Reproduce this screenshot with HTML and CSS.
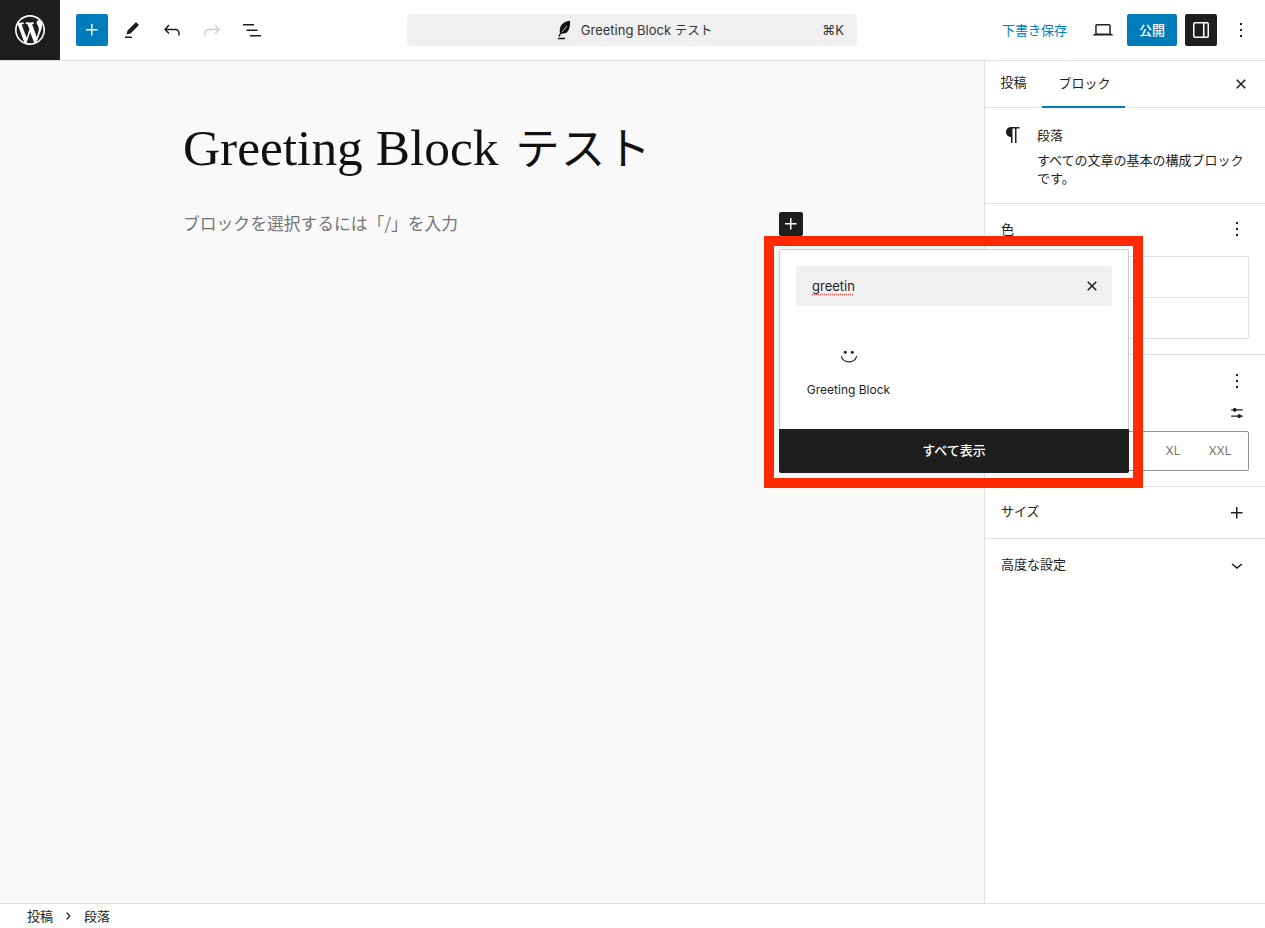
FILE: index.html
```html
<!DOCTYPE html>
<html lang="ja">
<head>
<meta charset="utf-8">
<title>Greeting Block テスト</title>
<link rel="stylesheet" href="styles.css">
</head>
<body>
<div class="app">
  <header class="topbar">
    <div class="top-left">
      <a class="wp-logo"><svg class="logo-svg" viewBox="0 0 20 20"><path d="M20 10c0-5.51-4.49-10-10-10C4.48 0 0 4.49 0 10c0 5.52 4.48 10 10 10 5.51 0 10-4.48 10-10zM7.78 15.37L4.37 6.22c.55-.02 1.17-.08 1.17-.08.5-.06.44-1.13-.06-1.11 0 0-1.45.11-2.37.11-.18 0-.37 0-.58-.01C4.12 2.69 6.87 1.11 10 1.11c2.33 0 4.45.87 6.05 2.34-.68-.11-1.65.39-1.65 1.58 0 .74.45 1.36.9 2.1.35.61.55 1.36.55 2.46 0 1.49-1.4 5-1.4 5l-3.03-8.37c.54-.02.82-.17.82-.17.5-.05.44-1.25-.06-1.22 0 0-1.44.12-2.38.12-.87 0-2.33-.12-2.33-.12-.5-.03-.56 1.2-.06 1.22l.92.08 1.26 3.41zM17.41 10c.24-.64.74-1.87.43-4.25.7 1.29 1.05 2.71 1.05 4.25 0 3.29-1.73 6.24-4.4 7.78.97-2.59 1.94-5.2 2.92-7.78zM6.1 18.09C3.12 16.65 1.11 13.53 1.11 10c0-1.3.23-2.48.72-3.59C3.25 10.3 4.67 14.2 6.1 18.09zm4.03-6.63l2.58 6.98c-.86.29-1.76.45-2.71.45-.79 0-1.57-.11-2.29-.33.81-2.38 1.62-4.74 2.42-7.1z"/></svg></a>
      <div class="tools">
        <button class="icon-btn primary"><svg class="ic" viewBox="0 0 24 24"><path d="M11 12.5V17.5H12.5V12.5H17.5V11H12.5V6H11V11H6V12.5H11Z"/></svg></button>
        <button class="icon-btn tool"><svg class="ic" viewBox="0 0 24 24"><path d="m19 7-3-3-8.5 8.5-1 4 4-1L19 7Zm-7 11.5H5V20h7v-1.5Z"/></svg></button>
        <button class="icon-btn tool"><svg class="ic" viewBox="0 0 24 24"><path d="M18.3 11.7c-.6-.6-1.4-.9-2.3-.9H6.7l2.9-3.3-1.1-1-4.5 5L8.5 16l1-1-2.7-2.7H16c.5 0 .9.2 1.3.5 1 1 1 3.4 1 4.5v.3h1.5v-.2c0-1.5 0-4.3-1.5-5.7z"/></svg></button>
        <button class="icon-btn tool muted"><svg class="ic" viewBox="0 0 24 24"><path d="M15.6 6.5l-1.1 1 2.9 3.3H8c-.9 0-1.7.3-2.3.9-1.4 1.5-1.4 4.2-1.4 5.6v.2h1.5v-.3c0-1.1 0-3.5 1-4.5.3-.3.7-.5 1.3-.5h9.2L14.5 15l1.1 1.1 4.6-4.6-4.6-5z"/></svg></button>
        <button class="icon-btn tool"><svg class="ic" viewBox="0 0 24 24"><path d="M3 6h11v1.5H3V6Zm3.5 5.5h11V13h-11v-1.5ZM21 17H10v1.5h11V17Z"/></svg></button>
      </div>
    </div>
    <div class="command">
      <div class="command-title">
        <svg class="ic feather" viewBox="0 0 24 24"><path fill-rule="evenodd" d="M18.500 2.500C13.500 3.100 10.200 5.100 8.600 8.300 7.600 10.400 7.600 13.100 8 14.900L6.400 18.100l1.200.6 1.500-3c2.200.3 4.600-.2 6.300-1.900 2.200-2.200 2.900-6.200 2.600-11.300zM9.600 14.200L14.700 7.800l.5.4-5.100 6.400zM6 19.700h7v1.500H6v-1.500z"/></svg>
        <span>Greeting Block <span class="title-ja">テスト</span></span>
      </div>
      <span class="shortcut">⌘K</span>
    </div>
    <div class="top-right">
      <a class="save-link">下書き保存</a>
      <button class="icon-btn view"><svg class="ic" viewBox="0 0 24 24"><path d="M20.5 16h-.7V8c0-1.1-.9-2-2-2H6.2c-1.1 0-2 .9-2 2v8h-.7c-.8 0-1.5.7-1.5 1.5h20c0-.8-.7-1.5-1.5-1.5zM5.7 8c0-.3.2-.5.5-.5h11.6c.3 0 .5.2.5.5v7.6H5.7V8z"/></svg></button>
      <button class="publish">公開</button>
      <button class="icon-btn dark"><svg class="ic" viewBox="0 0 24 24"><path fill-rule="evenodd" d="M18 4H6c-1.1 0-2 .9-2 2v12c0 1.1.9 2 2 2h12c1.1 0 2-.9 2-2V6c0-1.1-.9-2-2-2zm-4 14.5H6c-.3 0-.5-.2-.5-.5V6c0-.3.2-.5.5-.5h8v13zm4.500-.5c0 .3-.2.5-.5.5h-2.500v-13H18c.3 0 .5.2.5.5v12z"/></svg></button>
      <button class="icon-btn more"><svg class="ic" viewBox="0 0 24 24"><path d="M13 19h-2v-2h2v2zm0-6h-2v-2h2v2zm0-6h-2V5h2v2z"/></svg></button>
    </div>
  </header>

  <div class="workspace">
    <main class="canvas">
      <h1 class="post-title">Greeting Block <span class="post-title-ja">テスト</span></h1>
      <p class="placeholder">ブロックを選択するには「/」を入力</p>
    </main>

    <aside class="sidebar">
      <div class="tabs">
        <button class="tab">投稿</button>
        <button class="tab active">ブロック</button>
        <button class="icon-btn tab-close"><svg class="ic" viewBox="0 0 24 24"><path d="M12 13.06l3.712 3.713 1.061-1.06L13.061 12l3.712-3.712-1.06-1.06L12 10.938 8.288 7.227l-1.061 1.06L10.939 12l-3.712 3.712 1.06 1.061L12 13.061z"/></svg></button>
      </div>
      <section class="block-card">
        <svg class="ic card-icon" viewBox="0 0 24 24"><path d="m9.99609 14v-.2251l.00391.0001v6.225h1.5v-14.5h2.5v14.5h1.5v-14.5h3v-1.5h-8.50391c-2.76142 0-5 2.23858-5 5 0 2.7614 2.23858 5 5 5z"/></svg>
        <div class="card-text">
          <div class="card-title">段落</div>
          <div class="card-desc">すべての文章の基本の構成ブロックです。</div>
        </div>
      </section>
      <section class="panel color-panel">
        <div class="panel-head"><span>色</span><svg class="ic" viewBox="0 0 24 24"><path d="M13 19h-2v-2h2v2zm0-6h-2v-2h2v2zm0-6h-2V5h2v2z"/></svg></div>
        <div class="color-list"><div class="color-row"></div><div class="color-row"></div></div>
      </section>
      <section class="panel type-panel">
        <div class="panel-head end"><svg class="ic" viewBox="0 0 24 24"><path d="M13 19h-2v-2h2v2zm0-6h-2v-2h2v2zm0-6h-2V5h2v2z"/></svg></div>
        <div class="size-head"><svg class="ic-sm" viewBox="0 0 24 24"><path d="m19 7.5h-7.628c-.3089-.87389-1.1423-1.5-2.122-1.5-.97966 0-1.81309.62611-2.12197 1.5h-2.12803v1.5h2.12803c.30888.87389 1.14231 1.5 2.12197 1.5.9797 0 1.8131-.62611 2.122-1.5h7.628z"/><path d="m19 15h-2.128c-.3089-.8739-1.1423-1.5-2.122-1.5s-1.8131.6261-2.122 1.5h-7.628v1.5h7.628c.3089.8739 1.1423 1.5 2.122 1.5s1.8131-.6261 2.122-1.5h2.128z"/></svg></div>
        <div class="size-toggle"><span>XL</span><span>XXL</span></div>
      </section>
      <section class="row-panel size-panel"><span>サイズ</span><svg class="ic" viewBox="0 0 24 24"><path d="M11 12.5V17.5H12.5V12.5H17.5V11H12.5V6H11V11H6V12.5H11Z"/></svg></section>
      <section class="row-panel adv-panel"><span>高度な設定</span><svg class="ic" viewBox="0 0 24 24"><path d="M17.5 11.6L12 16l-5.5-4.4.9-1.2L12 14l4.5-3.6 1 1.2z"/></svg></section>
    </aside>
  </div>

  <footer class="crumbs">
    <span>投稿</span>
    <svg class="crumb-sep" viewBox="0 0 24 24"><path d="M10.6 6L9.4 7l4.6 5-4.6 5 1.2 1 5.4-6z"/></svg>
    <span>段落</span>
  </footer>

  <button class="inserter-toggle"><svg class="ic" viewBox="0 0 24 24"><path d="M11 12.5V17.5H12.5V12.5H17.5V11H12.5V6H11V11H6V12.5H11Z"/></svg></button>

  <div class="popover">
    <div class="search">
      <span class="search-text">greetin</span>
      <svg class="ic" viewBox="0 0 24 24"><path d="M12 13.06l3.712 3.713 1.061-1.06L13.061 12l3.712-3.712-1.06-1.06L12 10.938 8.288 7.227l-1.061 1.06L10.939 12l-3.712 3.712 1.06 1.061L12 13.061z"/></svg>
    </div>
    <div class="results">
      <div class="result">
        <svg class="smile" viewBox="0 0 20 20"><circle cx="6.300" cy="3.200" r="1.500"/><circle cx="13.300" cy="3.200" r="1.500"/><path class="smile-arc" d="M2.300 7.200C3.300 10.800 6.200 12.900 10 12.900s6.700-2.100 7.700-5.700"/></svg>
        <span>Greeting Block</span>
      </div>
    </div>
    <button class="browse">すべて表示</button>
  </div>

  <div class="highlight"></div>
</div>
</body>
</html>
```
FILE: styles.css
```css
* { box-sizing: border-box; }
html, body { margin: 0; height: 100%; }
body {
  font-family: "Noto Sans CJK JP", sans-serif;
  font-size: 13px;
  line-height: 20px;
  color: #1e1e1e;
  overflow: hidden;
}
button { font: inherit; color: inherit; border: 0; background: none; padding: 0; }
svg { display: block; fill: currentColor; }
.ic { width: 24px; height: 24px; flex: none; }
.ic-sm { width: 20px; height: 20px; flex: none; }

.app { position: relative; height: 928px; display: flex; flex-direction: column; background: #f9f9f9; }

/* top bar */
.topbar {
  height: 61px; flex: none; background: #fff; border-bottom: 1px solid #e0e0e0;
  display: grid; grid-template-columns: 407px 450px 1fr; align-items: center;
}
.top-left { display: flex; align-items: center; }
.wp-logo { width: 60px; height: 60px; background: #1e1e1e; color: #fff; display: flex; align-items: center; justify-content: center; }
.logo-svg { width: 30px; height: 30px; }
.tools { display: flex; align-items: center; margin-left: 16px; }
.icon-btn { width: 32px; height: 32px; display: flex; align-items: center; justify-content: center; border-radius: 2px; }
.primary { background: #007cba; color: #fff; }
.tool { width: 40px; }
.tools .primary + .tool { margin-left: 4px; }
.muted { color: #cfcfcf; }

.command {
  height: 32px; background: #f0f0f0; border-radius: 4px; position: relative;
  display: flex; align-items: center; justify-content: center;
}
.command-title { display: flex; align-items: center; gap: 5px; color: #333; font-family: Inter, "Noto Sans CJK JP", sans-serif; }
.feather { color: #111; }
.title-ja { font-size: 12.5px; }
.shortcut { position: absolute; right: 13px; color: #333; font-family: Inter, "Noto Sans CJK JP", sans-serif; }

.top-right { display: flex; align-items: center; justify-content: flex-end; padding-right: 12px; }
.save-link { color: #007cba; margin-right: 20px; }
.view { width: 32px; margin-right: 8px; }
.publish { width: 50px; height: 32px; background: #007cba; color: #fff; border-radius: 2px; margin-right: 8px; font-weight: 500; }
.dark { background: #1e1e1e; color: #fff; margin-right: 12px; }
.more { width: 24px; }

/* body */
.workspace { flex: 1; display: flex; min-height: 0; }
.canvas { flex: 1; padding: 52px 0 0 183px; }
.post-title {
  margin: 0; font-family: "Liberation Serif", "Noto Sans CJK JP", serif;
  font-weight: 400; font-size: 51.400px; line-height: 70px; color: #111;
}
.post-title-ja { font-size: 44.500px; font-weight: 400; letter-spacing: 1px; margin-left: 4px; }
.placeholder { margin: 25px 0 0; font-size: 16.800px; line-height: 26px; color: #757575; }

.sidebar { width: 281px; flex: none; background: #fff; border-left: 1px solid #e0e0e0; }
.tabs { height: 47px; display: flex; align-items: stretch; border-bottom: 1px solid #e0e0e0; position: relative; }
.tab { width: 57px; height: 46px; white-space: nowrap; padding-bottom: 4px; }
.tab.active { width: 83px; height: 47px; box-shadow: inset 0 -2px 0 #007cba; padding-left: 2px; }
.tab-close { margin: 7px 12px 0 auto; width: 24px; }
.block-card { display: flex; gap: 12px; padding: 15px 16px 0 16px; height: 96px; border-bottom: 1px solid #e0e0e0; }
.card-desc { margin-top: 4px; line-height: 18px; }
.card-title { line-height: 24px; }
.panel { border-bottom: 1px solid #e0e0e0; padding: 0 16px; }
.panel-head { display: flex; justify-content: space-between; align-items: center; height: 24px; }
.panel-head.end { justify-content: flex-end; }
.color-panel { height: 151px; padding-top: 13px; }
.color-list { margin-top: 15px; border: 1px solid #e0e0e0; border-radius: 2px; height: 83px; }
.color-row { height: 40px; }
.color-row + .color-row { border-top: 1px solid #e0e0e0; }
.type-panel { height: 132px; padding-top: 14px; }
.size-head { display: flex; justify-content: flex-end; margin: 10px 2px 0 0; height: 20px; }
.size-toggle {
  margin-top: 8px; height: 40px; border: 1px solid #949494; border-radius: 2px;
  display: flex; justify-content: flex-end; align-items: center; color: #757575; font-size: 12px;
  font-family: Inter, sans-serif; padding-right: 1px;
}
.size-toggle span { width: 40px; text-align: center; }
.size-toggle span:last-child { width: 54px; }
.row-panel { display: flex; justify-content: space-between; align-items: center; padding: 0 16px; border-bottom: 1px solid #e0e0e0; height: 52px; }
.row-panel span { padding-bottom: 3px; }
.adv-panel { border-bottom: 0; }

/* breadcrumb */
.crumbs {
  height: 25px; flex: none; background: #fff; border-top: 1px solid #e0e0e0;
  display: flex; align-items: center; padding-left: 27px;
}
.crumb-sep { width: 14px; height: 14px; margin: 0 9px 0 8px; stroke: currentColor; stroke-width: 1; }

/* overlays */
.inserter-toggle {
  position: absolute; left: 779px; top: 212px; width: 24px; height: 24px;
  background: #1e1e1e; color: #fff; border-radius: 2px; display: flex; align-items: center; justify-content: center;
}
.popover {
  position: absolute; left: 779px; top: 249px; width: 350px; height: 224px;
  background: #fff; border: 1px solid #ccc; border-radius: 2px; box-shadow: 0 2px 6px rgba(0,0,0,.05);
  display: flex; flex-direction: column; padding: 16px 16px 0;
}
.search {
  height: 40px; background: #f0f0f0; border-radius: 2px; flex: none;
  display: flex; align-items: center; justify-content: space-between; padding: 0 8px 0 16px;
}
.search-text { font-family: Inter, sans-serif; text-decoration: underline dotted #e65054; text-underline-offset: 3px; }
.results { flex: 1; padding-top: 43px; margin-left: -16px; }
.result { width: 137px; display: flex; flex-direction: column; align-items: center; font-size: 12px; font-family: Inter, sans-serif; }
.smile { width: 20px; height: 20px; margin: 0 0 11px; }
.smile-arc { fill: none; stroke: currentColor; stroke-width: 1.200; }
.browse {
  flex: none; height: 44px; margin: 0 -17px -1px; background: #1e1e1e; color: #fff; font-weight: 500; padding-bottom: 2px;
  border-radius: 0 0 2px 2px;
}
.highlight {
  position: absolute; left: 764px; top: 236px; width: 379px; height: 252px;
  border: 10px solid #ff2a00; pointer-events: none;
}
```
